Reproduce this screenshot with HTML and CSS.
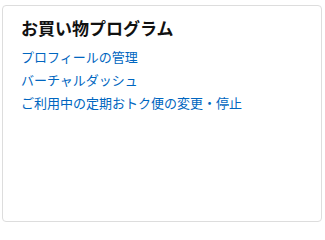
FILE: index.html
```html
<!DOCTYPE html>
<html lang="ja">
<head>
<meta charset="utf-8">
<link rel="stylesheet" href="styles.css">
</head>
<body>
<div class="card">
  <h2 class="card-title">お買い物プログラム</h2>
  <ul class="links">
    <li><a href="#">プロフィールの管理</a></li>
    <li><a href="#">バーチャルダッシュ</a></li>
    <li><a href="#">ご利用中の定期おトク便の変更・停止</a></li>
  </ul>
</div>
</body>
</html>
```
FILE: styles.css
```css
html, body {
  margin: 0;
  padding: 0;
  background: #fff;
}
body {
  font-family: Arial, "Liberation Sans", "Noto Sans CJK JP", sans-serif;
  width: 325px;
  height: 225px;
  overflow: hidden;
}
.card {
  box-sizing: border-box;
  margin: 5px 0 0 2px;
  width: 320px;
  height: 217px;
  border: 1px solid #dddddd;
  border-radius: 4px;
  padding: 13px 19px 0 18px;
}
.card-title {
  margin: 0;
  font-size: 17px;
  line-height: 21px;
  font-weight: 700;
  color: #111111;
}
.links {
  list-style: none;
  margin: 6px 0 0 0;
  padding: 0;
}
.links li {
  font-size: 13px;
  line-height: 23px;
}
.links a {
  color: #0066c0;
  text-decoration: none;
}
```
